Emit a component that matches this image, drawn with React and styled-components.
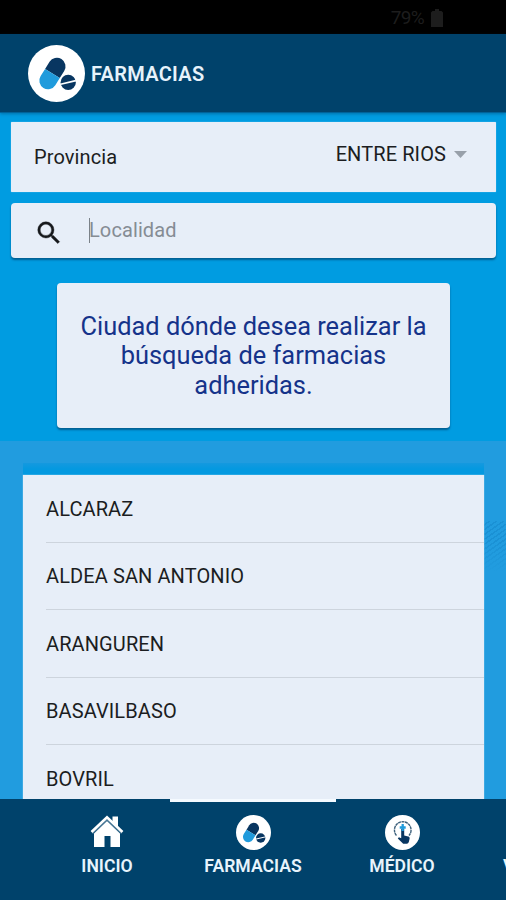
import styled, { createGlobalStyle } from "styled-components";

const palette = {
    navy: '#00426b',
    blue: '#009ce1',
    lightBlue: '#219cdf',
    card: '#e7eef8',
    ink: '#1b1d21',
    title: '#15338a'
}

const GlobalStyle = createGlobalStyle`
    * {
        box-sizing: border-box;
    }
    body {
        margin: 0;
        font-family: Roboto, "Liberation Sans", sans-serif;
        color: ${palette.ink};
    }
`

const Screen = styled.div`
    display: flex;
    flex-direction: column;
    width: 506px;
    height: 900px;
    overflow: hidden;
    background: ${palette.blue};
`

const StatusBar = styled.div`
    display: flex;
    flex: none;
    align-items: center;
    justify-content: flex-end;
    gap: 7px;
    height: 34px;
    padding: 1px 63px 0 0;
    background: #000;
    color: #1d1d1d;
    font-size: 19px;
    letter-spacing: -0.7px;
`

const Header = styled.header`
    display: flex;
    flex: none;
    align-items: center;
    gap: 6px;
    height: 79px;
    padding-left: 28px;
    background: ${palette.navy};
    border-bottom: 1px solid #00639a;
    box-shadow: 0 1px 3px rgba(0, 50, 90, 0.4);
    h1 {
        margin: 1px 0 0;
        color: #e6f3fb;
        font-size: 20px;
        font-weight: 600;
        letter-spacing: 0.3px;
    }
`

const Filters = styled.section`
    display: flex;
    flex: none;
    flex-direction: column;
    height: 328px;
    padding: 9px 10px 0 11px;
`

const Card = styled.div`
    display: flex;
    flex: none;
    background: ${palette.card};
    border-radius: ${({ $square }) => ($square ? '1px' : '4px')};
    box-shadow: ${({ $square }) => ($square ? '0 0 1px #bfe6fa' : '0 2px 2px rgba(0, 55, 95, 0.6)')};
`

const ProvinceCard = styled(Card)`
    align-items: center;
    justify-content: space-between;
    height: 70px;
    padding: 0 29px 1px 23px;
    font-size: 20px;
    letter-spacing: 0.1px;
`

const Select = styled.div`
    display: flex;
    align-items: center;
    gap: 8px;
    margin-bottom: 5px;
    letter-spacing: 0.1px;
`

const SearchCard = styled(Card)`
    align-items: center;
    height: 55px;
    margin-top: 11px;
    padding: 4px 0 0 23px;
`

const Placeholder = styled.div`
    height: 25px;
    margin: 0 0 5px 25px;
    border-left: 1px solid #7b8289;
    color: #858c94;
    font-size: 20px;
    line-height: 25px;
    letter-spacing: 0.1px;
    text-indent: -1px;
`

const InfoCard = styled(Card)`
    align-self: center;
    align-items: center;
    justify-content: center;
    width: 393px;
    height: 145px;
    margin: 25px 1px 0 0;
    color: ${palette.title};
    font-size: 25.4px;
    line-height: 29.5px;
    text-align: center;
    p {
        width: 352px;
        margin: 1px 0 0 1px;
    }
`

const Results = styled.section`
    flex: 1;
    min-height: 0;
    padding: 22px 22px 0 23px;
    overflow: hidden;
    background:
        linear-gradient(180deg, rgba(33, 156, 223, 0) 40%, ${palette.lightBlue}) 484px 78px / 22px 54px no-repeat,
        repeating-linear-gradient(145deg, transparent 0 2.5px, rgba(0, 105, 175, 0.22) 2.5px 4px) 484px 80px / 22px 50px no-repeat,
        ${palette.lightBlue};
`

const ListShade = styled.div`
    height: 12px;
    background: linear-gradient(#1599df, #0499e0 50%);
`

const List = styled.ul`
    margin: 0;
    padding: 0;
    list-style: none;
    background: ${palette.card};
    box-shadow: 0 0 1px #c7e9fa;
`

// 목록의 도시 한 줄
const City = styled.li`
    display: flex;
    align-items: center;
    height: 67.5px;
    margin-left: 23px;
    padding-top: 1px;
    border-bottom: 1.5px solid #cdd4dd;
    font-size: 20px;
    letter-spacing: 0.1px;
`

const TabBar = styled.nav`
    display: flex;
    flex: none;
    height: 101px;
    padding-left: 44px;
    overflow: hidden;
    background: ${palette.navy};
`

const Tab = styled.div`
    display: flex;
    flex: none;
    flex-direction: column;
    align-items: ${({ $start }) => ($start ? 'flex-start' : 'center')};
    width: ${({ $width }) => $width}px;
    padding-left: ${({ $start }) => ($start ? '35px' : 0)};
    border-top: 3px solid ${({ $active }) => ($active ? '#f5faff' : 'transparent')};
    color: #e8f4fc;
    font-size: 17.6px;
    font-weight: 600;
`

const TabIcon = styled.div`
    display: flex;
    height: 38px;
    padding-top: 13px;
    margin-bottom: 16px;
`

const PillIcon = ({ size }) => (
    <svg width={size} height={size} viewBox="0 0 56 56">
        <circle cx="28" cy="28" r="28" fill="#fff" />
        <g transform="rotate(32 24 28)">
            <path d="M15.500 28v-8.250a8.500 8.500 0 0 1 17 0V28z" fill="#083661" />
            <path d="M15.500 28v8.250a8.500 8.500 0 0 0 17 0V28z" fill="#209bdc" />
        </g>
        <circle cx="39.500" cy="36.800" r="7.500" fill="#083661" />
        <path d="M32 38.500l15-3.500" stroke="#fff" strokeWidth="1.600" />
    </svg>
)

const HomeIcon = () => (
    <svg width="34" height="33" viewBox="0 0 34 33">
        <path d="M22.500 1.500h5.500v11l-5.500-5z" fill="#fff" />
        <path d="M4 18.500L17 6l13 12.500V32h-9.500V21h-6v11H4z" fill="#fff" />
        <path d="M2.500 18.500L17 4.800l14.500 13.700" fill="none" stroke="#4f7d9a" strokeWidth="1.200" />
        <path d="M1.500 17L17 2.200 32.500 17" fill="none" stroke="#fff" strokeWidth="2.600" />
    </svg>
)

const DoctorIcon = () => (
    <svg width="35" height="35" viewBox="0 0 35 35">
        <circle cx="17.500" cy="17.500" r="17.500" fill="#fff" />
        <path d="M11.500 20.500a8.300 8.300 0 1 1 12.500 0" fill="none" stroke="#3d617c" strokeWidth="1.400" strokeDasharray="3 0.500" />
        <path d="M16.200 14h3v6.500l4 1c1.400.4 1.600 1.200 1.400 2.300l-.8 3.200q-.5 1.800-2 1.800h-3.600l-5.400-5.400 1.100-1.200 2.300 1z" fill="#083661" />
        <path d="M17.700 9v7M14.700 12.500h6" stroke="#209bdc" strokeWidth="2.300" />
    </svg>
)

const cities = ['ALCARAZ', 'ALDEA SAN ANTONIO', 'ARANGUREN', 'BASAVILBASO', 'BOVRIL']

const App = () => {
    return (
        <>
            <GlobalStyle />
            <Screen>
                <StatusBar>
                    <span>79%</span>
                    <svg width="12" height="18" viewBox="0 0 12 18">
                        <path d="M4 0h4v2h2.500L12 3.500V18H0V3.500L1.500 2H4z" fill="#1d1d1d" />
                    </svg>
                </StatusBar>
                <Header>
                    <PillIcon size={57} />
                    <h1>FARMACIAS</h1>
                </Header>
                <Filters>
                    <ProvinceCard $square>
                        <span>Provincia</span>
                        <Select>
                            ENTRE RIOS
                            <svg width="13" height="7" viewBox="0 0 13 7">
                                <path d="M0 0h13L6.500 7z" fill="#98a0aa" />
                            </svg>
                        </Select>
                    </ProvinceCard>
                    <SearchCard>
                        <svg width="30" height="30" viewBox="0 0 24 24">
                            <path d="M15.500 14h-.79l-.28-.27A6.471 6.471 0 0 0 16 9.500 6.500 6.500 0 1 0 9.500 16c1.610 0 3.090-.59 4.230-1.570l.27.28v.79l5 4.990L20.490 19l-4.990-5zm-6 0C7.010 14 5 11.990 5 9.500S7.010 5 9.500 5 14 7.010 14 9.500 11.990 14 9.500 14z" fill="#16181c" stroke="#16181c" strokeWidth="0.300" />
                        </svg>
                        <Placeholder>Localidad</Placeholder>
                    </SearchCard>
                    <InfoCard>
                        <p>Ciudad dónde desea realizar la búsqueda de farmacias adheridas.</p>
                    </InfoCard>
                </Filters>
                <Results>
                    <ListShade />
                    <List>
                        {cities.map(city => (
                            <City key={city}>{city}</City>
                        ))}
                    </List>
                </Results>
                <TabBar>
                    <Tab $width={126}>
                        <TabIcon><HomeIcon /></TabIcon>
                        INICIO
                    </Tab>
                    <Tab $width={166} $active>
                        <TabIcon><PillIcon size={35} /></TabIcon>
                        FARMACIAS
                    </Tab>
                    <Tab $width={132}>
                        <TabIcon><DoctorIcon /></TabIcon>
                        MÉDICO
                    </Tab>
                    <Tab $width={132} $start>
                        <TabIcon />
                        V
                    </Tab>
                </TabBar>
            </Screen>
        </>
    );
};

export default App;
